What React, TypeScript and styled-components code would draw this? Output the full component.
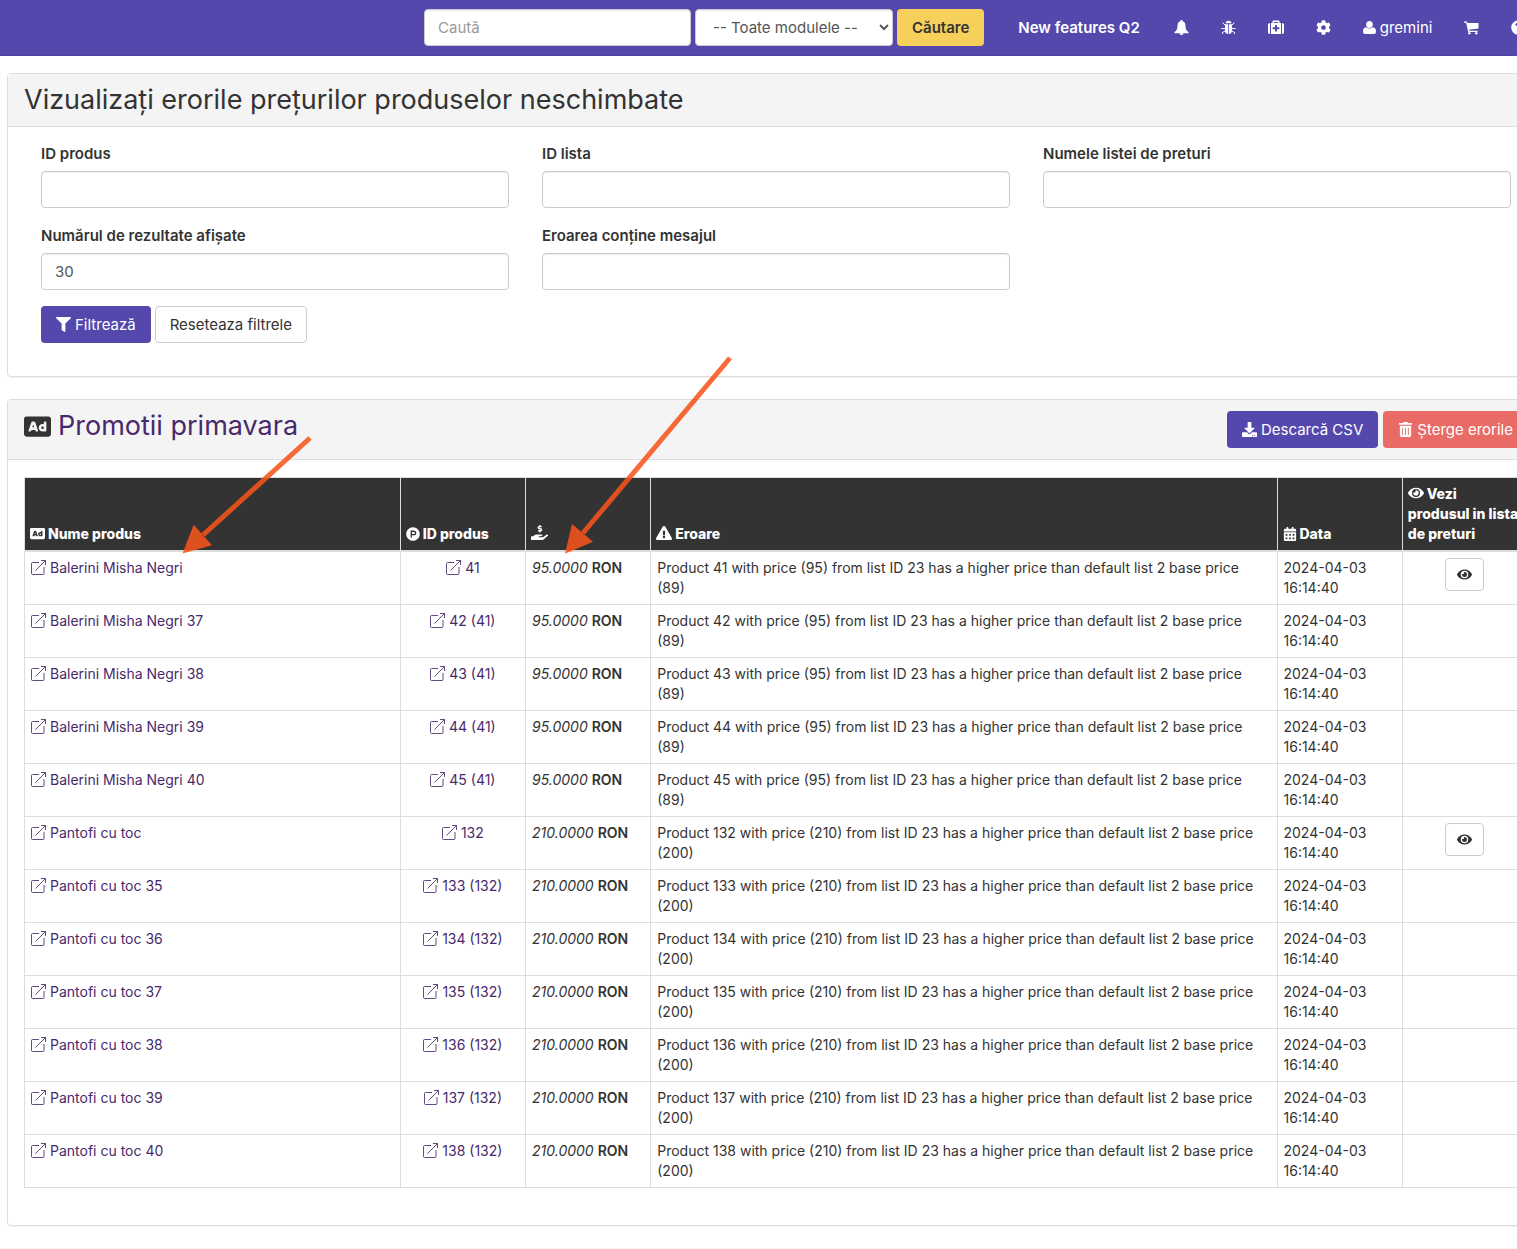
import React from "react";
import styled, { createGlobalStyle } from "styled-components";
import {
  FaAd, FaCalendarAlt, FaCog, FaDownload, FaExclamationTriangle, FaEye, FaFilter,
  FaHandHoldingUsd, FaProductHunt, FaQuestionCircle, FaTrashAlt,
} from "react-icons/fa";

const GlobalStyle = createGlobalStyle`
  *, *::before, *::after { box-sizing: border-box; }
  body {
    margin: 0;
    background: #fff;
    color: #333;
    font-family: Inter, "Liberation Sans", sans-serif;
    font-size: 15px;
    line-height: 23px;
  }
  a { color: #482a6b; text-decoration: none; }
`;

const Page = styled.div`
  position: relative;
  overflow: hidden;
`;

const Wide = styled.div`
  margin-right: -35px;
`;

const Navbar = styled.header`
  display: flex;
  align-items: center;
  height: 56px;
  padding-left: 424px;
  background: #5448ad;
  border-bottom: 1px solid #4c419f;
`;

const SearchForm = styled.form`
  display: flex;
  gap: 4px;
  margin-right: 16px;
`;

const Control = styled.input`
  width: 100%;
  height: 37px;
  padding: 6px 13px;
  border: 1px solid #ccc;
  border-radius: 4px;
  background: #fff;
  box-shadow: inset 0 1px 1px rgba(0, 0, 0, 0.075);
  color: #555;
  font: inherit;
  &::placeholder { color: #999; }
`;

const SearchBox = styled(Control)`
  width: 267px;
`;

const ModuleSelect = styled(Control).attrs({ as: "select" })`
  width: 198px;
  padding-right: 0;
`;

const Button = styled.button<{ $tone?: "primary" | "danger" | "warning"; $small?: boolean }>`
  display: inline-flex;
  align-items: center;
  justify-content: center;
  gap: 4px;
  height: ${(p) => (p.$small ? 33 : 37)}px;
  padding: 0 ${(p) => (p.$small ? 11 : 14)}px;
  border: 1px solid ${(p) => (p.$tone ? "transparent" : "#ccc")};
  border-radius: 4px;
  background: ${(p) =>
    p.$tone === "primary" ? "#5448ad" : p.$tone === "danger" ? "#e86b66" : p.$tone === "warning" ? "#f6d05a" : "#fff"};
  background-clip: border-box;
  color: ${(p) => (p.$tone === "primary" || p.$tone === "danger" ? "#fff" : "#333")};
  font: inherit;
  font-weight: ${(p) => (p.$tone === "warning" ? 600 : 400)};
  white-space: nowrap;
`;

const NavLinks = styled.nav`
  display: flex;
  align-items: center;
`;

const NavLink = styled.a<{ $strong?: boolean }>`
  display: flex;
  align-items: center;
  gap: 4px;
  padding: 0 ${(p) => (p.$strong ? 18 : 16)}px;
  color: #fff;
  font-weight: ${(p) => (p.$strong ? 600 : 400)};
  white-space: nowrap;
`;

const Glyph = styled.svg`
  display: block;
  height: 15px;
  fill: currentColor;
  stroke: none;
`;

const Main = styled.main`
  display: flex;
  flex-direction: column;
  gap: 22px;
  padding: 17px 7px 22px;
  border-bottom: 1px solid #f5f5f5;
`;

const Card = styled.section`
  border: 1px solid #ddd;
  border-radius: 4px;
  box-shadow: 0 1px 1px rgba(0, 0, 0, 0.05);
`;

const CardHeader = styled.div`
  display: flex;
  justify-content: space-between;
  align-items: flex-start;
  padding: 11px 16px;
  border-bottom: 1px solid #ddd;
  background: #f4f4f4;
`;

const Title = styled.h2`
  display: flex;
  align-items: center;
  gap: 7px;
  margin: 0;
  font-size: 27px;
  font-weight: 400;
  line-height: 30px;
`;

const Actions = styled.div`
  display: flex;
  gap: 5px;
`;

const FilterForm = styled.form`
  display: grid;
  grid-template-columns: repeat(3, 1fr);
  gap: 16px 33px;
  padding: 15px 33px 33px;
`;

const Field = styled.div`
  display: flex;
  flex-direction: column;
  gap: 6px;
`;

const Label = styled.label`
  font-weight: 600;
`;

const FormActions = styled.div`
  grid-column: 1 / -1;
  display: flex;
  gap: 4px;
`;

const TableWrap = styled.div`
  padding: 17px 16px 37px;
`;

const Table = styled.table`
  width: 100%;
  table-layout: fixed;
  border-collapse: collapse;
  font-size: 14px;
  line-height: 20px;
`;

const Col = styled.col<{ $parts: number }>`
  width: calc(100% * ${(p) => p.$parts} / 12);
`;

const Th = styled.th`
  padding: 6px 8px 6px 5px;
  border: 1px solid #ddd;
  border-bottom-width: 2px;
  background: #333;
  color: #fff;
  font-weight: 800;
  text-align: left;
  vertical-align: bottom;
  svg { vertical-align: -2px; margin-right: 3px; }
`;

const Td = styled.td<{ $center?: boolean }>`
  padding: 6px ${(p) => (p.$center ? 6 : 8)}px 6px 6px;
  border: 1px solid #ddd;
  text-align: ${(p) => (p.$center ? "center" : "left")};
  vertical-align: top;
`;

const ViewCell = styled(Td)`
  line-height: 0;
`;

const Strong = styled.strong`
  font-weight: 600;
`;

const NewWindow = styled.svg`
  width: 15px;
  height: 15px;
  margin-right: 4px;
  vertical-align: -2px;
  fill: none;
  stroke: currentColor;
  stroke-opacity: 0.85;
`;

const Arrows = styled.svg`
  position: absolute;
  top: 0;
  left: 0;
  width: 800px;
  height: 600px;
  pointer-events: none;
`;

const OpenIcon = () => (
  <NewWindow viewBox="0 0 15 15" aria-hidden="true">
    <path d="M8 2.5H1.5Q.5 2.5 .5 3.5V13.5Q.5 14.5 1.5 14.5H12Q13 14.5 13 13.5V7M4.5 10.5L14.5 .5M10 .5H14.5V5" />
  </NewWindow>
);

const BellIcon = () => (
  <Glyph viewBox="0 0 15 15" width="15" aria-hidden="true">
    <path d="M7.5 0c.8 0 1.2.5 1.2 1.2C10.8 1.8 11.5 3.6 11.5 6c0 3 .8 4.6 3 6v1.2H.5V12c2.200-1.400 3-3 3-6 0-2.400.7-4.200 2.800-4.800C6.3.5 6.7 0 7.5 0zM5.500 13.400h4a2 1.600 0 0 1-4 0z" />
  </Glyph>
);

const BugIcon = () => (
  <Glyph viewBox="0 0 15 15" width="15" aria-hidden="true">
    <path d="M4.5 3.3a3 2.600 0 0 1 6 0zM4 4.300h3.100V14C5 13.800 4 12.500 4 10.500zM7.900 4.300H11v6.200c0 2-1 3.300-3.100 3.500z" />
    <path fill="none" stroke="currentColor" d="M1.5 2.5L4 5M.5 8.500H4M1.500 14V12.500L4 11M13.500 2.500L11 5M14.500 8.500H11M13.500 14V12.500L11 11" />
  </Glyph>
);

const MedkitIcon = () => (
  <Glyph viewBox="0 0 16 15" width="16" aria-hidden="true">
    <path d="M2 3v11C.7 14 0 13.300 0 12V5C0 3.700.7 3 2 3zM14 3v11c1.300 0 2-.7 2-2V5c0-1.300-.7-2-2-2z" />
    <path fillRule="evenodd" d="M3 3h1.500V1.500Q4.500.5 5.500.5h5q1 0 1 1V3H13v11H3zM6 3h4V2H6zM7 5v2.300H4.700v2H7v2.300h2V9.300h2.300v-2H9V5z" />
  </Glyph>
);

const UserIcon = () => (
  <Glyph viewBox="0 0 13 15" width="13" aria-hidden="true">
    <path d="M6.500 1a3.300 3.500 0 1 1 0 7 3.300 3.500 0 0 1 0-7zM3 7.200Q6.500 10 10 7.200q3 .3 3 4.300 0 2.500-2 2.500H2q-2 0-2-2.500Q0 7.500 3 7.200z" />
  </Glyph>
);

const CartIcon = () => (
  <Glyph viewBox="0 0 15 15" width="15" aria-hidden="true">
    <path d="M0 1.500h3L3.500 3h11v5.500L5 9.700l.2 1.100h8.300V12H4.200L2.200 2.700H0z" />
    <circle cx="5.3" cy="13.3" r="1.2" />
    <circle cx="12.3" cy="13.3" r="1.2" />
  </Glyph>
);

type Product = { id: number; parent?: number; name: string; price: number; base: number };

const family = (name: string, first: number, count: number, price: number, base: number): Product[] =>
  Array.from({ length: count }, (_, i) => ({
    id: first + i,
    parent: i ? first : undefined,
    name: i ? `${name} ${41 - count + i}` : name,
    price,
    base,
  }));

const products = [
  ...family("Balerini Misha Negri", 41, 5, 95, 89),
  ...family("Pantofi cu toc", 132, 7, 210, 200),
];

const fields = [
  { id: "product-id", label: "ID produs" },
  { id: "list-id", label: "ID lista" },
  { id: "list-name", label: "Numele listei de preturi" },
  { id: "limit", label: "Numărul de rezultate afișate", value: "30" },
  { id: "message", label: "Eroarea conține mesajul" },
];

export default function App() {
  return (
    <Page>
      <GlobalStyle />
      <Wide>
        <Navbar>
          <SearchForm>
            <SearchBox placeholder="Caută" aria-label="Caută" />
            <ModuleSelect aria-label="Module">
              <option>-- Toate modulele --</option>
            </ModuleSelect>
            <Button type="button" $tone="warning">Căutare</Button>
          </SearchForm>
          <NavLinks>
            <NavLink href="#" $strong>New features Q2</NavLink>
            <NavLink href="#" aria-label="Notificări"><BellIcon /></NavLink>
            <NavLink href="#" aria-label="Erori"><BugIcon /></NavLink>
            <NavLink href="#" aria-label="Asistență"><MedkitIcon /></NavLink>
            <NavLink href="#" aria-label="Setări"><FaCog /></NavLink>
            <NavLink href="#"><UserIcon />gremini</NavLink>
            <NavLink href="#" aria-label="Coș"><CartIcon /></NavLink>
            <NavLink href="#" aria-label="Ajutor"><FaQuestionCircle /></NavLink>
          </NavLinks>
        </Navbar>
        <Main>
          <Card>
            <CardHeader>
              <Title>Vizualizați erorile prețurilor produselor neschimbate</Title>
            </CardHeader>
            <FilterForm>
              {fields.map((f) => (
                <Field key={f.id}>
                  <Label htmlFor={f.id}>{f.label}</Label>
                  <Control id={f.id} defaultValue={f.value} />
                </Field>
              ))}
              <FormActions>
                <Button type="button" $tone="primary"><FaFilter />Filtrează</Button>
                <Button type="reset">Reseteaza filtrele</Button>
              </FormActions>
            </FilterForm>
          </Card>
          <Card>
            <CardHeader>
              <Title><FaAd size={27} /><a href="#">Promotii primavara</a></Title>
              <Actions>
                <Button type="button" $tone="primary"><FaDownload />Descarcă CSV</Button>
                <Button type="button" $tone="danger"><FaTrashAlt />Șterge erorile</Button>
              </Actions>
            </CardHeader>
            <TableWrap>
              <Table>
                <colgroup>
                  {[3, 1, 1, 5, 1, 1].map((parts, i) => <Col key={i} $parts={parts} />)}
                </colgroup>
                <thead>
                  <tr>
                    <Th><FaAd size={15} />Nume produs</Th>
                    <Th><FaProductHunt size={14} />ID produs</Th>
                    <Th aria-label="Preț"><FaHandHoldingUsd size={17} /></Th>
                    <Th><FaExclamationTriangle size={16} />Eroare</Th>
                    <Th><FaCalendarAlt size={14} />Data</Th>
                    <Th><FaEye size={16} />Vezi produsul in lista de preturi</Th>
                  </tr>
                </thead>
                <tbody>
                  {products.map((p) => (
                    <tr key={p.id}>
                      <Td><a href="#"><OpenIcon />{p.name}</a></Td>
                      <Td $center><a href="#"><OpenIcon />{p.parent ? `${p.id} (${p.parent})` : p.id}</a></Td>
                      <Td><em>{p.price.toFixed(4)}</em> <Strong>RON</Strong></Td>
                      <Td>{`Product ${p.id} with price (${p.price}) from list ID 23 has a higher price than default list 2 base price (${p.base})`}</Td>
                      <Td>2024-04-03 16:14:40</Td>
                      <ViewCell $center>
                        {!p.parent && <Button type="button" $small aria-label="Vezi produsul"><FaEye size={15} /></Button>}
                      </ViewCell>
                    </tr>
                  ))}
                </tbody>
              </Table>
            </TableWrap>
          </Card>
        </Main>
      </Wide>
      <Arrows viewBox="0 0 800 600" aria-hidden="true">
        <g opacity="0.87" fill="#f8541c" stroke="#f8541c">
          <path strokeWidth="5" d="M310 438L203 535M730 358L583 533" />
          <path stroke="none" d="M182.5 553.5L193.7 524.7L212 545.3ZM565 553.7L572 524L593 541.7Z" />
        </g>
      </Arrows>
    </Page>
  );
}
